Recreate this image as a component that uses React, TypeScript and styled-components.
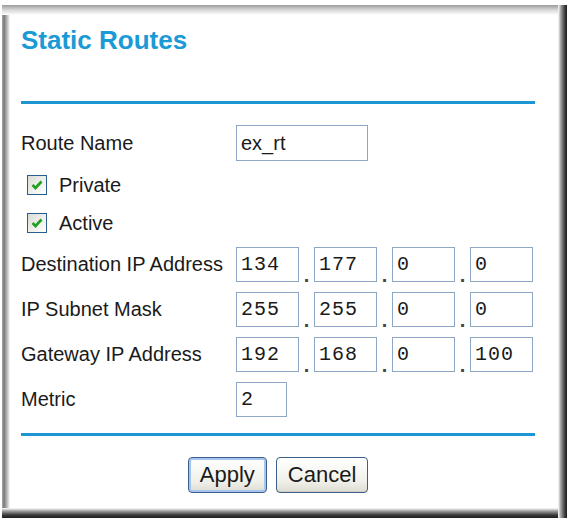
import React from 'react';
import styled, { createGlobalStyle } from 'styled-components';

const GlobalStyle = createGlobalStyle`
  html, body {
    margin: 0;
    padding: 0;
    background: #fff;
  }
`;

const Frame = styled.div`
  box-sizing: border-box;
  margin: 5px 0 0 2px;
  width: 565px;
  height: 513px;
  padding: 20px 32px 0 19px;
  font-family: 'Liberation Sans', Arial, sans-serif;
  color: #1a1a1a;
  background:
    linear-gradient(to left, #1e1e1e, #3a3a3a 2px, #9a9a9a 6px, #fff 9px) right / 9px 100% no-repeat,
    linear-gradient(to top, #1e1e1e, #3a3a3a 3px, #a0a0a0 7px, #fff 10px) bottom / 100% 10px no-repeat,
    linear-gradient(to bottom, #9c9c9c, #d8d8d8 5px, #fff 10px) top / 100% 10px no-repeat,
    linear-gradient(to right, #a8a8a8, #7a7a7a 2px, #b8b8b8 5px, #fff 8px) left / 8px 100% no-repeat,
    #fff;
`;

const Title = styled.h1`
  margin: 0;
  font-size: 26px;
  line-height: 30px;
  font-weight: bold;
  color: #1a9ad6;
`;

const Rule = styled.div<{ $top: number }>`
  margin-top: ${p => p.$top}px;
  height: 3px;
  background: #1b96d2;
`;

const Form = styled.div`
  display: flex;
  flex-direction: column;
  gap: 10px;
  margin-top: 21px;
`;

const Row = styled.div<{ $h: number }>`
  display: flex;
  align-items: center;
  height: ${p => p.$h}px;
`;

const Label = styled.span`
  width: 215px;
  font-size: 20px;
  white-space: nowrap;
`;

const Field = styled.input<{ $w: number; $h?: number; $mono?: boolean }>`
  box-sizing: border-box;
  width: ${p => p.$w}px;
  height: ${p => p.$h || 35}px;
  margin: 0;
  padding: 0 4px;
  border: 1px solid #8ea7c4;
  background: #fff;
  color: #1a1a1a;
  outline: none;
  font-family: ${p =>
    p.$mono ? "'Liberation Mono', 'Courier New', monospace" : "'Liberation Sans', Arial, sans-serif"};
  font-size: 20px;
  letter-spacing: ${p => (p.$mono ? '1px' : '0')};
`;

const IpGroup = styled.div`
  display: flex;
  align-items: stretch;
  height: 35px;
`;

const Dot = styled.span`
  width: 15px;
  display: flex;
  align-items: flex-end;
  justify-content: center;
  font-size: 20px;
  line-height: 14px;
  font-weight: bold;
  color: #444;
`;

const CheckRow = styled.label`
  display: flex;
  align-items: center;
  gap: 12px;
  height: 28px;
  margin-left: 6px;
  font-size: 20px;
`;

const Box = styled.span`
  box-sizing: border-box;
  width: 20px;
  height: 20px;
  border: 1px solid #2a5d8f;
  background: linear-gradient(135deg, #dcdcd6, #fff);
  display: flex;
  align-items: center;
  justify-content: center;
`;

const Buttons = styled.div`
  display: flex;
  justify-content: center;
  gap: 9px;
  margin-top: 21px;
`;

const Button = styled.button<{ $default?: boolean }>`
  box-sizing: border-box;
  height: 36px;
  padding: 0 11px;
  border: 1px solid #3b5f86;
  border-radius: 4px;
  background: linear-gradient(to bottom, #fff, #f0f0ea 70%, #dcdcd2);
  font-family: 'Liberation Sans', Arial, sans-serif;
  font-size: 22px;
  color: #1a1a1a;
  box-shadow: ${p => (p.$default ? 'inset 0 0 0 2px #a6c4ef' : 'inset 0 -1px 0 #d0d0c8')};
`;

const Check = () => (
  <svg width="14" height="14" viewBox="0 0 14 14">
    <path d="M2.5 7 L5.5 10 L11.5 3.5" fill="none" stroke="#21a121" strokeWidth="2.6" />
  </svg>
);

const Checkbox = ({ label }: { label: string }) => (
  <CheckRow>
    <Box>
      <Check />
    </Box>
    {label}
  </CheckRow>
);

const IpField = ({ parts }: { parts: string[] }) => (
  <IpGroup>
    {parts.map((part, i) => (
      <React.Fragment key={i}>
        {i > 0 && <Dot>.</Dot>}
        <Field $w={63} $mono value={part} readOnly />
      </React.Fragment>
    ))}
  </IpGroup>
);

const App = () => (
  <>
    <GlobalStyle />
    <Frame>
      <Title>Static Routes</Title>
      <Rule $top={46} />
      <Form>
        <Row $h={36}>
          <Label>Route Name</Label>
          <Field $w={132} $h={36} value="ex_rt" readOnly />
        </Row>
        <Checkbox label="Private" />
        <Checkbox label="Active" />
        <Row $h={35}>
          <Label>Destination IP Address</Label>
          <IpField parts={['134', '177', '0', '0']} />
        </Row>
        <Row $h={35}>
          <Label>IP Subnet Mask</Label>
          <IpField parts={['255', '255', '0', '0']} />
        </Row>
        <Row $h={35}>
          <Label>Gateway IP Address</Label>
          <IpField parts={['192', '168', '0', '100']} />
        </Row>
        <Row $h={35}>
          <Label>Metric</Label>
          <Field $w={51} $mono value="2" readOnly />
        </Row>
      </Form>
      <Rule $top={16} />
      <Buttons>
        <Button $default>Apply</Button>
        <Button>Cancel</Button>
      </Buttons>
    </Frame>
  </>
);

export default App;
